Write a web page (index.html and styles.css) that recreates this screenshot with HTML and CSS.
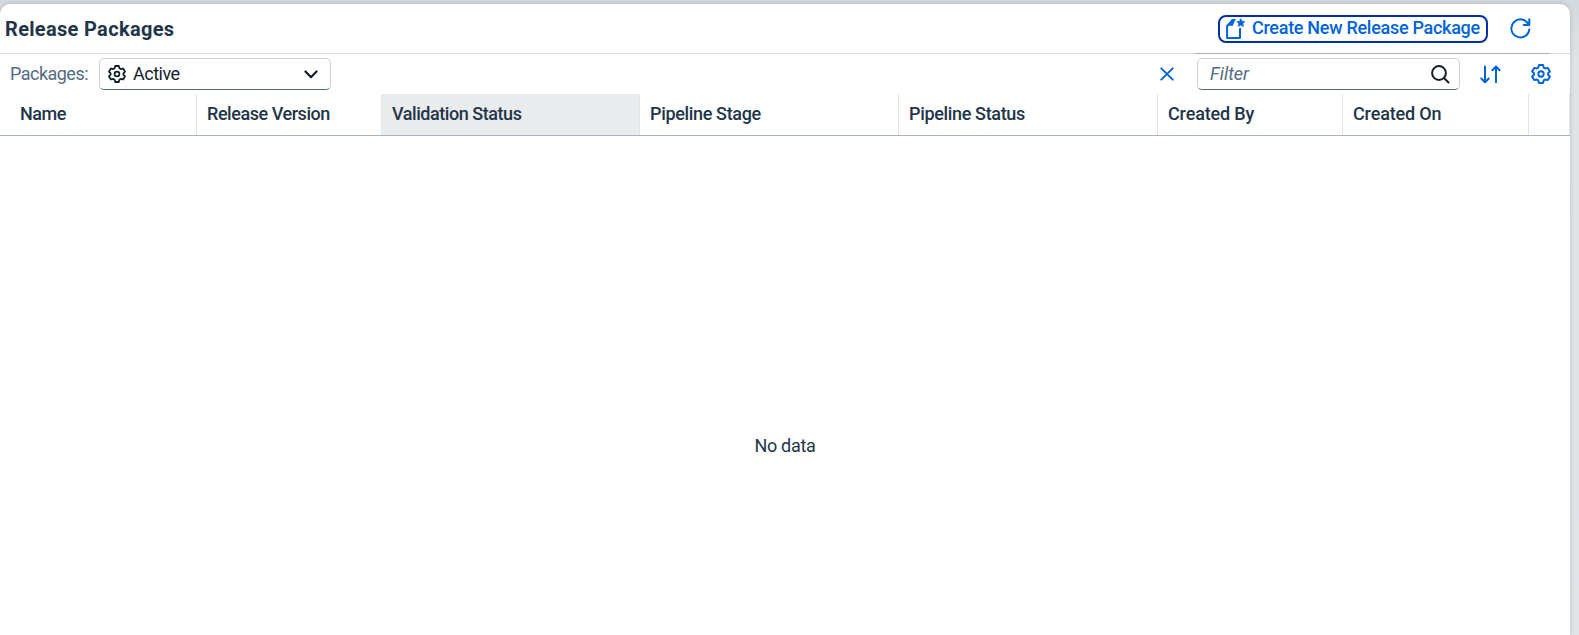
FILE: index.html
```html
<!DOCTYPE html>
<html lang="en">
<head>
<meta charset="utf-8">
<title>Release Packages</title>
<link rel="stylesheet" href="styles.css">
</head>
<body>
<svg width="0" height="0" class="defs" aria-hidden="true">
  <symbol id="gear" viewBox="0 0 20 20">
    <path d="M8 1.1H12L12.7 3.6L14.2 4.5L16.8 3.9L18.9 7.4L17.1 9.3V10.7L18.9 12.6L16.8 16.1L14.2 15.5L12.7 16.4L12 18.9H8L7.3 16.4L5.8 15.5L3.2 16.1L1.1 12.6L2.9 10.7V9.3L1.1 7.4L3.2 3.9L5.8 4.5L7.3 3.6Z" fill="none" stroke="currentColor" stroke-width="2" stroke-linejoin="round"/>
    <circle cx="10" cy="10" r="2.7" fill="none" stroke="currentColor" stroke-width="1.9"/>
  </symbol>
</svg>
<main class="card">
  <header class="title-bar">
    <h1 class="title"><span>Release Packages</span></h1>
    <button class="create">
      <svg class="create-icon" width="19" height="22" viewBox="0 0 19 22" fill="none"><path d="M8.500 2H7L1.100 8V19.900H14V10.700" stroke="currentColor" stroke-width="2" stroke-linejoin="round" stroke-linecap="round"/><path d="M6 1H9.500L6.800 7.800H1Z" fill="currentColor"/><path d="M14.800 .6L16.100 3.200L19 3.600L16.900 5.600L17.500 8.600L14.800 7.200L12.100 8.600L12.700 5.600L10.600 3.600L13.500 3.200Z" fill="currentColor" stroke="currentColor" stroke-width=".5"/></svg>
      <span class="create-text">Create New Release Package</span>
    </button>
    <button class="refresh" aria-label="Refresh"><svg width="21" height="21" viewBox="0 0 21 21" fill="none" stroke="currentColor" stroke-width="2" stroke-linecap="round" stroke-linejoin="round"><path d="M19.300 11.500A9 9 0 1 1 18.500 6.500M19.300 1.200V7H13.700"/></svg></button>
  </header>
  <section class="toolbar">
    <span class="label">Packages:</span>
    <div class="select">
      <svg class="select-gear" width="18" height="18"><use href="#gear"/></svg>
      <span class="select-text">Active</span>
      <svg class="chevron" width="14" height="9" viewBox="0 0 14 9"><path d="M1.500 1.500L7 7.200L12.500 1.500" fill="none" stroke="currentColor" stroke-width="2.200" stroke-linecap="round" stroke-linejoin="round"/></svg>
    </div>
    <button class="clear" aria-label="Clear"><svg width="14" height="14" viewBox="0 0 14 14"><path d="M1.300 1.300L12.700 12.700M12.700 1.300L1.300 12.700" stroke="currentColor" stroke-width="1.900" stroke-linecap="round"/></svg></button>
    <div class="search">
      <span class="placeholder">Filter</span>
      <svg width="19" height="19" viewBox="0 0 19 19" fill="none" stroke="currentColor" stroke-width="2" stroke-linecap="round"><circle cx="8" cy="8" r="6.900"/><path d="M13 13L17.500 17.500"/></svg>
    </div>
    <button class="sort" aria-label="Sort"><svg width="21" height="19" viewBox="0 0 21 19" fill="none" stroke="currentColor" stroke-width="2" stroke-linecap="round" stroke-linejoin="round"><path d="M5 1.500V17M1.300 13.500L5 17.200L8.700 13.500M16 17.200V2M12.300 5.200L16 1.500L19.700 5.200"/></svg></button>
    <button class="settings" aria-label="Settings"><svg width="20" height="20"><use href="#gear"/></svg></button>
  </section>
  <div class="columns">
    <div class="col name"><span>Name</span></div>
    <div class="col"><span>Release Version</span></div>
    <div class="col active"><span>Validation Status</span></div>
    <div class="col pipeline"><span>Pipeline Stage</span></div>
    <div class="col pipeline"><span>Pipeline Status</span></div>
    <div class="col created"><span>Created By</span></div>
    <div class="col created"><span>Created On</span></div>
    <div class="col"></div>
  </div>
  <div class="empty"><span>No data</span></div>
</main>
</body>
</html>
```
FILE: styles.css
```css
* { box-sizing: border-box; }
body {
  margin: 0;
  height: 635px;
  padding: 4px 9px 0 0;
  overflow: hidden;
  background: linear-gradient(#d3d9dd, #dfe3e6 60px, #e0e4e8);
  font-family: Roboto, "Liberation Sans", sans-serif;
  font-size: 18px;
  line-height: 24px;
  color: #223548;
}
.defs { position: absolute; }
.card {
  height: 631px;
  display: flex;
  flex-direction: column;
  background: #fff;
  border-radius: 10px 10px 0 0;
  box-shadow: 0 0 4px rgba(34, 53, 72, .22);
  overflow: hidden;
}
button {
  display: flex;
  align-items: center;
  padding: 0;
  border: 0;
  background: none;
  color: #0064d9;
  font: inherit;
}
svg { display: block; flex: none; }
span { white-space: nowrap; }
.title-bar {
  flex: 0 0 50px;
  display: flex;
  align-items: center;
  padding: 0 39px 1px 5px;
  background:
    linear-gradient(#a8b3bd, #a8b3bd) 1195px 100% / 355px 1px no-repeat,
    linear-gradient(#d9d9d9, #d9d9d9) 0 100% / 100% 1px no-repeat;
}
.title {
  flex: 1;
  margin: 0;
  font-size: 20px;
  font-weight: 700;
  letter-spacing: .32px;
}
.create {
  height: 28px;
  width: 270px;
  padding-left: 6px;
  margin: 0 22px 0 0;
  border: 2px solid #0032a5;
  border-radius: 8px;
  font-weight: 500;
}
.create-text {
  margin-left: 7px;
  padding-bottom: 2px;
  letter-spacing: -.29px;
}
.toolbar {
  flex: 0 0 40px;
  display: flex;
  align-items: center;
  padding: 0 19px 0 10px;
}
.label { width: 89px; color: #556b82; letter-spacing: -.52px; }
.select, .search {
  height: 32px;
  display: flex;
  align-items: center;
  border: 1px solid #c9d1d9;
  border-bottom-color: #556b81;
  border-radius: 5px;
  color: #131e29;
}
.select { width: 232px; padding: 0 12px 0 8px; }
.select-text { flex: 1; margin-left: 7px; letter-spacing: -.5px; }
.clear { margin-left: auto; }
.search { width: 263px; margin-left: 23px; padding: 0 9px 0 12px; }
.placeholder { flex: 1; font-style: italic; color: #556b82; }
.sort { margin-left: 20px; }
.settings { margin-left: 30px; }
.columns {
  flex: 0 0 42px;
  display: grid;
  grid-template-columns: 197px 185px 258px 259px 259px 185px 186px 41px;
  border-bottom: 1px solid #a8b3bd;
}
.col {
  display: flex;
  align-items: center;
  padding: 0 0 2px 10px;
  border-right: 1px solid #e1e3e5;
  font-weight: 500;
  letter-spacing: -.45px;
}
.name { padding-left: 20px; }
.active { background: #eaebed; }
.pipeline { letter-spacing: -.34px; }
.created { letter-spacing: -.15px; }
.empty {
  flex: 1;
  display: flex;
  justify-content: center;
  padding-top: 298px;
  letter-spacing: -.28px;
}
```
